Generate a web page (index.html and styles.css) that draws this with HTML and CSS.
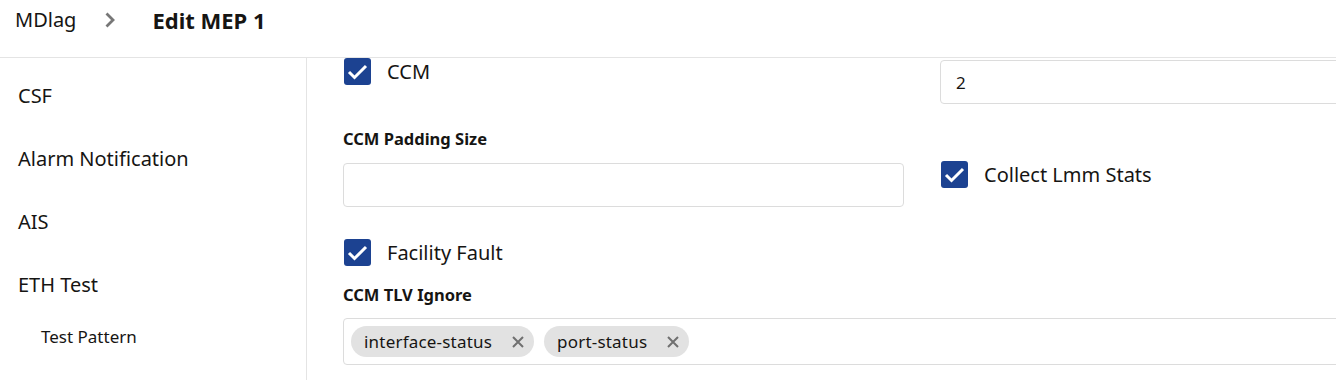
FILE: index.html
```html
<!DOCTYPE html>
<html lang="en">
<head>
    <meta charset="UTF-8">
    <meta name="viewport" content="width=device-width, initial-scale=1.0">
    <title>Edit MEP 1</title>
    <link rel="stylesheet" href="styles.css">
</head>
<body>
    <div class="header">
        <span class="crumb">MDlag</span>
        <svg class="chevron" width="12" height="18" viewBox="0 0 12 18">
            <polyline points="2.5,2.5 9,9 2.5,15.5" fill="none" stroke="#777" stroke-width="2.8"/>
        </svg>
        <span class="title">Edit MEP 1</span>
    </div>

    <div class="layout">
        <div class="sidebar">
            <div class="nav-item">CSF</div>
            <div class="nav-item">Alarm Notification</div>
            <div class="nav-item">AIS</div>
            <div class="nav-item">ETH Test</div>
            <div class="nav-item sub">Test Pattern</div>
            <div class="nav-item">Synthetic Loss</div>
        </div>

        <div class="main">
            <div class="row">
                <div class="col">
                    <label class="check">
                        <span class="box">
                            <svg width="27" height="27" viewBox="0 0 27 27"><polyline points="5,14 10.5,19.5 22,8" fill="none" stroke="#fff" stroke-width="3"/></svg>
                        </span>
                        CCM
                    </label>
                </div>
                <div class="col">
                    <input class="field first" type="text" value="2">
                </div>
            </div>

            <div class="row row-padding">
                <div class="col">
                    <div class="field-label">CCM Padding Size</div>
                    <input class="field" type="text">
                </div>
                <div class="col col-check">
                    <label class="check">
                        <span class="box">
                            <svg width="27" height="27" viewBox="0 0 27 27"><polyline points="5,14 10.5,19.5 22,8" fill="none" stroke="#fff" stroke-width="3"/></svg>
                        </span>
                        Collect Lmm Stats
                    </label>
                </div>
            </div>

            <div class="row row-fault">
                <label class="check">
                    <span class="box">
                        <svg width="27" height="27" viewBox="0 0 27 27"><polyline points="5,14 10.5,19.5 22,8" fill="none" stroke="#fff" stroke-width="3"/></svg>
                    </span>
                    Facility Fault
                </label>
            </div>

            <div class="tlv">
                <div class="field-label">CCM TLV Ignore</div>
                <div class="tags">
                    <span class="chip">interface-status
                        <svg width="12" height="12" viewBox="0 0 12 12"><path d="M1 1 L11 11 M11 1 L1 11" stroke="#707070" stroke-width="2"/></svg>
                    </span>
                    <span class="chip">port-status
                        <svg width="12" height="12" viewBox="0 0 12 12"><path d="M1 1 L11 11 M11 1 L1 11" stroke="#707070" stroke-width="2"/></svg>
                    </span>
                </div>
            </div>
        </div>
    </div>
</body>
</html>
```

FILE: styles.css
```css
body {
    margin: 0;
    font-family: "Noto Sans", Arial, sans-serif;
    color: #161513;
    background-color: #fff;
    overflow: hidden;
}

.header {
    height: 58px;
    box-sizing: border-box;
    border-bottom: 1px solid #e4e4e4;
    display: flex;
    align-items: flex-start;
    padding: 6px 0 0 15px;
}

.crumb {
    font-size: 20px;
    line-height: 28px;
}

.chevron {
    margin: 5px 36px 0 28px;
}

.title {
    font-size: 22px;
    font-weight: bold;
    line-height: 28px;
}

.layout {
    display: flex;
    height: 322px;
}

.sidebar {
    width: 306px;
    flex-shrink: 0;
    border-right: 1px solid #e4e4e4;
    padding-top: 6px;
}

.nav-item {
    height: 63px;
    display: flex;
    align-items: center;
    padding-left: 18px;
    font-size: 20px;
}

.nav-item.sub {
    height: 40px;
    padding-left: 41px;
    font-size: 17px;
}

.main {
    padding-left: 36px;
}

.row {
    display: flex;
    gap: 36px;
}

.col {
    width: 561px;
    flex-shrink: 0;
}

.check {
    display: flex;
    align-items: center;
    gap: 16px;
    font-size: 20px;
    line-height: 27px;
    margin-left: 1px;
}

.box {
    width: 27px;
    height: 27px;
    border-radius: 3px;
    background-color: #1c4291;
    display: block;
}

.box svg {
    display: block;
}

.field {
    display: block;
    width: 100%;
    height: 44px;
    box-sizing: border-box;
    border: 1px solid #dcdcdc;
    border-radius: 4px;
    padding: 0 15px;
    font-family: inherit;
    font-size: 17px;
    color: #161513;
    margin-top: 13px;
}

.field.first {
    margin-top: 2px;
    width: 600px;
}

.row-padding {
    margin-top: 24px;
}

.field-label {
    font-size: 16.5px;
    font-weight: bold;
    line-height: 22px;
}

.col-check {
    padding-top: 33px;
}

.row-fault {
    margin-top: 32px;
}

.tlv {
    margin-top: 18px;
}

.tags {
    margin-top: 12px;
    width: 1158px;
    height: 47px;
    box-sizing: border-box;
    border: 1px solid #dcdcdc;
    border-radius: 4px;
    display: flex;
    align-items: center;
    gap: 10px;
    padding-left: 7px;
}

.chip {
    display: flex;
    align-items: center;
    gap: 20px;
    height: 31px;
    padding: 0 10px 0 13px;
    border-radius: 16px;
    background-color: #e2e2e2;
    font-size: 17px;
    letter-spacing: 0.2px;
}
```
